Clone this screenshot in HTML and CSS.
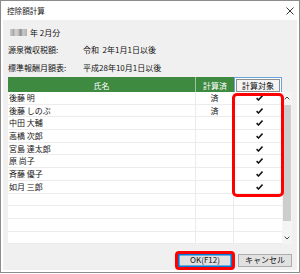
FILE: index.html
```html
<!DOCTYPE html>
<html lang="ja">
<head>
<meta charset="utf-8">
<link rel="stylesheet" href="styles.css">
</head>
<body>
<div class="window">
  <div class="titlebar">
    <span class="title">控除額計算</span>
    <svg class="close" width="8" height="8" viewBox="0 0 8 8"><path d="M0.5 0.5L7.5 7.5M7.5 0.5L0.5 7.5" stroke="#222" stroke-width="0.9" fill="none"/></svg>
  </div>
  <div class="body">
    <div class="period"><span class="mosaic"></span><span>年 2月分</span></div>
    <div class="info">
      <span class="label">源泉徴収税額:</span><span>令和&nbsp;&nbsp;2年1月1日以後</span>
      <span class="label">標準報酬月額表:</span><span>平成28年10月1日以後</span>
    </div>
    <div class="table">
      <div class="thead">
        <div class="th name-h">氏名</div>
        <div class="th done-h">計算済</div>
        <div class="th target-h"><span class="hbtn">計算対象</span></div>
      </div>
      <div class="list">
        <div class="rows">
          <div class="row"><span class="c name">後藤 明</span><span class="c done">済</span><span class="c chk"><svg width="7" height="6" viewBox="0 0 7 6"><path d="M0.6 3.1L2.5 5L6.5 0.6" stroke="#111" stroke-width="1.5" fill="none"/></svg></span></div>
          <div class="row"><span class="c name">後藤 しのぶ</span><span class="c done">済</span><span class="c chk"><svg width="7" height="6" viewBox="0 0 7 6"><path d="M0.6 3.1L2.5 5L6.5 0.6" stroke="#111" stroke-width="1.5" fill="none"/></svg></span></div>
          <div class="row"><span class="c name">中田 大輔</span><span class="c done"></span><span class="c chk"><svg width="7" height="6" viewBox="0 0 7 6"><path d="M0.6 3.1L2.5 5L6.5 0.6" stroke="#111" stroke-width="1.5" fill="none"/></svg></span></div>
          <div class="row"><span class="c name">高橋 次郎</span><span class="c done"></span><span class="c chk"><svg width="7" height="6" viewBox="0 0 7 6"><path d="M0.6 3.1L2.5 5L6.5 0.6" stroke="#111" stroke-width="1.5" fill="none"/></svg></span></div>
          <div class="row"><span class="c name">宮島 達太郎</span><span class="c done"></span><span class="c chk"><svg width="7" height="6" viewBox="0 0 7 6"><path d="M0.6 3.1L2.5 5L6.5 0.6" stroke="#111" stroke-width="1.5" fill="none"/></svg></span></div>
          <div class="row"><span class="c name">原 尚子</span><span class="c done"></span><span class="c chk"><svg width="7" height="6" viewBox="0 0 7 6"><path d="M0.6 3.1L2.5 5L6.5 0.6" stroke="#111" stroke-width="1.5" fill="none"/></svg></span></div>
          <div class="row"><span class="c name">斉藤 優子</span><span class="c done"></span><span class="c chk"><svg width="7" height="6" viewBox="0 0 7 6"><path d="M0.6 3.1L2.5 5L6.5 0.6" stroke="#111" stroke-width="1.5" fill="none"/></svg></span></div>
          <div class="row"><span class="c name">如月 三郎</span><span class="c done"></span><span class="c chk"><svg width="7" height="6" viewBox="0 0 7 6"><path d="M0.6 3.1L2.5 5L6.5 0.6" stroke="#111" stroke-width="1.5" fill="none"/></svg></span></div>
          <div class="row"><span class="c name"></span><span class="c done"></span><span class="c chk"></span></div>
          <div class="row"><span class="c name"></span><span class="c done"></span><span class="c chk"></span></div>
          <div class="row"><span class="c name"></span><span class="c done"></span><span class="c chk"></span></div>
          <div class="row"><span class="c name"></span><span class="c done"></span><span class="c chk"></span></div>
        </div>
        <div class="scroll">
          <svg class="arrow" width="6" height="4" viewBox="0 0 6 4"><path d="M0.7 3.3L3 1L5.3 3.3" stroke="#444" stroke-width="1" fill="none"/></svg>
          <div class="thumb"></div>
          <div class="track"></div>
          <svg class="arrow" width="6" height="4" viewBox="0 0 6 4"><path d="M0.7 0.7L3 3L5.3 0.7" stroke="#444" stroke-width="1" fill="none"/></svg>
        </div>
      </div>
    </div>
    <div class="buttons">
      <button class="btn ok">OK(F12)</button>
      <button class="btn">キャンセル</button>
    </div>
  </div>
  <div class="mark mark-col"></div>
  <div class="mark mark-ok"></div>
</div>
</body>
</html>
```

FILE: styles.css
```css
* { box-sizing: border-box; }
html, body {
  margin: 0;
  padding: 0;
  background: #fff;
  width: 300px;
  height: 274px;
  overflow: hidden;
}
body {
  font-family: "Noto Sans CJK JP", "Noto Sans", sans-serif;
  font-size: 8px;
  color: #111;
}
.window {
  position: relative;
  width: 300px;
  height: 273px;
  border: 1px solid #8c8c8c;
  background: #fff;
  display: flex;
  flex-direction: column;
}
.titlebar {
  height: 19px;
  flex: none;
  display: flex;
  align-items: center;
  justify-content: space-between;
  padding: 0 5px 0 6px;
  background: #fff;
}
.title {
  font-size: 7.6px;
  color: #222;
  line-height: 1;
}
.close { display: block; }
.body {
  flex: 1;
  margin: 0 2px 2px 2px;
  background: #f0f0f0;
  padding: 6px 5px 0 5px;
  display: flex;
  flex-direction: column;
}
.period {
  height: 12px;
  display: flex;
  align-items: center;
  padding-left: 2px;
}
.mosaic {
  width: 17px;
  height: 7px;
  margin-right: 3px;
  background: linear-gradient(90deg, #cfcfcf 0, #a9a9a9 20%, #d6d6d6 35%, #bcbcbc 50%, #8f8f8f 62%, #c9c9c9 78%, #b0b0b0 100%);
  filter: blur(0.4px);
}
.info {
  margin-top: 2px;
  display: grid;
  grid-template-columns: 75px auto;
  grid-auto-rows: 18px;
  align-items: center;
}
.table {
  margin-top: 1px;
}
.thead {
  display: grid;
  grid-template-columns: 188px 38px 48px;
  height: 15px;
}
.th {
  display: flex;
  align-items: center;
  justify-content: center;
}
.name-h, .done-h {
  background: #3d8a40;
  color: #fff;
}
.name-h { border-right: 1px solid #9cc49d; }
.target-h {
  background: #fdfdfd;
  border: 1px solid #6aa3dc;
  padding: 1px;
}
.hbtn {
  width: 100%;
  height: 100%;
  display: flex;
  align-items: center;
  justify-content: center;
  border: 1px solid #8d8d8d;
  background: #f4f4f4;
  color: #111;
}
.list {
  display: flex;
}
.rows {
  width: 274px;
}
.row {
  display: grid;
  grid-template-columns: 188px 38px 48px;
  height: 12.7px;
  background: #fff;
  border-bottom: 1.4px solid #ececec;
}
.c {
  display: flex;
  align-items: center;
  line-height: 1;
}
.name {
  padding-left: 1px;
  border-right: 1px solid #ebebeb;
}
.done {
  justify-content: center;
  border-right: 1px solid #ebebeb;
}
.chk {
  justify-content: center;
  padding-left: 2px;
}
.chk svg { display: block; }
.scroll {
  width: 10px;
  display: flex;
  flex-direction: column;
  align-items: center;
  background: #f4f4f4;
}
.arrow {
  display: block;
  flex: none;
  margin: 4px 0;
}
.thumb {
  width: 8px;
  height: 116px;
  background: #cdcdcd;
  margin-top: 1px;
}
.track { flex: 1; }
.buttons {
  margin-top: 9.6px;
  display: flex;
  justify-content: flex-end;
  gap: 6px;
}
.btn {
  width: 54px;
  height: 13px;
  padding: 0;
  font-family: inherit;
  font-size: 8px;
  line-height: 1;
  color: #111;
  background: #e1e1e1;
  border: 1px solid #adadad;
  display: flex;
  align-items: center;
  justify-content: center;
}
.ok {
  border-color: #0078d7;
  box-shadow: inset 0 0 0 0.6px #0078d7;
}
.mark {
  position: absolute;
  border: 3px solid #ff0000;
  border-radius: 5px;
}
.mark-col {
  left: 231px;
  top: 92px;
  width: 52px;
  height: 104px;
}
.mark-ok {
  left: 174px;
  top: 250px;
  width: 60px;
  height: 19px;
  border-radius: 4px;
}
```
